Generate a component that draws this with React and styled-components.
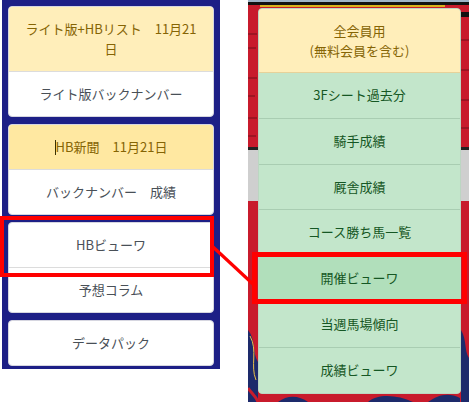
import React from 'react';
import styled, { createGlobalStyle, css } from 'styled-components';

const GlobalStyle = createGlobalStyle`
  html, body {
    margin: 0;
    padding: 0;
    background: #ffffff;
  }
  body {
    font-family: "Noto Sans CJK JP", "Noto Sans", sans-serif;
  }
`;

const leftGroups = [
  [
    { text: ['ライト版+HBリスト　11月21', '日'], tone: 'warning' },
    { text: ['ライト版バックナンバー'] },
  ],
  [
    { text: ['HB新聞　11月21日'], tone: 'warningHover', caret: true },
    { text: ['バックナンバー　成績'] },
  ],
  [
    { text: ['HBビューワ'] },
    { text: ['予想コラム'] },
  ],
  [
    { text: ['データパック'] },
  ],
];

const rightItems = [
  { text: ['3Fシート過去分'] },
  { text: ['騎手成績'] },
  { text: ['厩舎成績'] },
  { text: ['コース勝ち馬一覧'] },
  { text: ['開催ビューワ'], active: true },
  { text: ['当週馬場傾向'] },
  { text: ['成績ビューワ'] },
];

function Lines({ lines }) {
  return lines.map((l, i) => (
    <React.Fragment key={i}>
      {i > 0 && <br />}
      {l}
    </React.Fragment>
  ));
}

function PanelBackdrop() {
  return (
    <Backdrop viewBox="0 0 221 402" preserveAspectRatio="none">
      <rect x="0" y="0" width="221" height="402" fill="#c81b2c" />
      <rect x="0" y="0" width="221" height="2" fill="#9fb4c8" />
      <rect x="0" y="2" width="221" height="3" fill="#111111" />
      <rect x="12" y="5" width="185" height="2" fill="#d8b21c" />
      <rect x="212" y="12" width="9" height="5" fill="#111111" />
      <path d="M0 34 h9 M0 48 h8 M0 78 h9 M0 96 h7 M0 118 h9 M0 136 h8" stroke="#8e1420" strokeWidth="1.5" />
      <path d="M213 40 h8 M213 70 h8 M213 100 h8 M213 128 h8" stroke="#8e1420" strokeWidth="1.5" />
      <rect x="0" y="147" width="10" height="54" fill="#cfcfcf" />
      <rect x="0" y="147" width="10" height="3" fill="#222" />
      <rect x="213" y="147" width="8" height="54" fill="#cfcfcf" />
      <rect x="213" y="147" width="8" height="3" fill="#222" />
      <path d="M0 330 C8 340 4 352 10 362 L10 402 L0 402 Z" fill="#1d2a6b" />
      <path d="M2 336 C10 350 2 366 8 380" stroke="#e8c046" strokeWidth="1" fill="none" />
      <path d="M0 388 C4 394 8 396 10 402" stroke="#c81b2c" strokeWidth="3" fill="none" />
      <path d="M213 330 C219 340 216 350 221 358 L221 402 L213 402 Z" fill="#1d2a6b" />
      <path d="M30 402 C40 394 52 396 60 402 Z" fill="#1d2a6b" />
      <path d="M120 402 C130 393 150 395 165 402 Z" fill="#1d2a6b" />
      <path d="M180 402 C190 395 200 392 212 398 L212 402 Z" fill="#1d2a6b" />
    </Backdrop>
  );
}

export default function App() {
  return (
    <>
      <GlobalStyle />
      <Page>
        <LeftPanel>
          {leftGroups.map((group, gi) => (
            <Group key={gi}>
              {group.map((item, ii) => (
                <LeftItem key={ii} $tone={item.tone}>
                  {item.caret && <Caret />}
                  <Lines lines={item.text} />
                </LeftItem>
              ))}
            </Group>
          ))}
        </LeftPanel>

        <RightPanel>
          <PanelBackdrop />
          <Card>
            <CardHeader>
              <Lines lines={['全会員用', '(無料会員を含む)']} />
            </CardHeader>
            {rightItems.map((item, i) => (
              <RightItem key={i} $active={item.active}>
                <Lines lines={item.text} />
              </RightItem>
            ))}
          </Card>
        </RightPanel>

        <HighlightLeft />
        <Connector width="469" height="402" viewBox="0 0 469 402">
          <line x1="212" y1="246" x2="254" y2="285" stroke="#ff0000" strokeWidth="3.2" />
        </Connector>
        <HighlightRight />
      </Page>
    </>
  );
}

const Page = styled.div`
  position: relative;
  width: 469px;
  height: 402px;
  display: flex;
  align-items: flex-start;
  overflow: hidden;
`;

const LeftPanel = styled.div`
  margin-left: 2px;
  width: 218px;
  box-sizing: border-box;
  padding: 6px 6px 3px 6px;
  background: #1d1f86;
  display: flex;
  flex-direction: column;
  gap: 7px;
`;

const Group = styled.div`
  background: #ffffff;
  border: 1px solid #d6d6e0;
  border-radius: 4px;
  overflow: hidden;
`;

const tones = {
  warning: css`
    background: #ffeeba;
    color: #856404;
  `,
  warningHover: css`
    background: #ffe8a1;
    color: #856404;
  `,
};

const LeftItem = styled.div`
  padding: 12px 6px;
  font-size: 13px;
  line-height: 20px;
  text-align: center;
  color: #495057;
  white-space: nowrap;
  & + & {
    border-top: 1px solid #dcdcdc;
  }
  ${({ $tone }) => ($tone ? tones[$tone] : '')}
  ${({ $tone }) =>
    $tone &&
    css`
      & + * {
        border-top-color: #e8d59a;
      }
    `}
`;

const Caret = styled.span`
  display: inline-block;
  width: 0;
  height: 15px;
  border-left: 1px solid #3a3000;
  vertical-align: -3px;
`;

const RightPanel = styled.div`
  position: relative;
  margin-left: 28px;
  width: 221px;
  height: 402px;
  box-sizing: border-box;
  padding: 8px 8px 0 10px;
`;

const Backdrop = styled.svg`
  position: absolute;
  inset: 0;
  width: 100%;
  height: 100%;
`;

const Card = styled.div`
  position: relative;
  border: 1px solid #bcd6c2;
  border-radius: 4px;
  overflow: hidden;
  background: #c3e6cb;
`;

const CardHeader = styled.div`
  padding: 12px 6px;
  font-size: 13px;
  line-height: 19.5px;
  text-align: center;
  background: #ffeeba;
  color: #856404;
  border-bottom: 1px solid #e6d29a;
`;

const RightItem = styled.div`
  padding: 12px 6px;
  font-size: 13px;
  line-height: 20.8px;
  text-align: center;
  color: #155724;
  background: ${({ $active }) => ($active ? '#b1dfbb' : '#c3e6cb')};
  & + & {
    border-top: 1px solid #a9cdb2;
  }
`;

const HighlightLeft = styled.div`
  position: absolute;
  left: 0;
  top: 216px;
  width: 214px;
  height: 61px;
  box-sizing: border-box;
  border: 4px solid #ff0000;
`;

const HighlightRight = styled.div`
  position: absolute;
  left: 252px;
  top: 252px;
  width: 215px;
  height: 52px;
  box-sizing: border-box;
  border: 5px solid #ff0000;
`;

const Connector = styled.svg`
  position: absolute;
  left: 0;
  top: 0;
  pointer-events: none;
`;
